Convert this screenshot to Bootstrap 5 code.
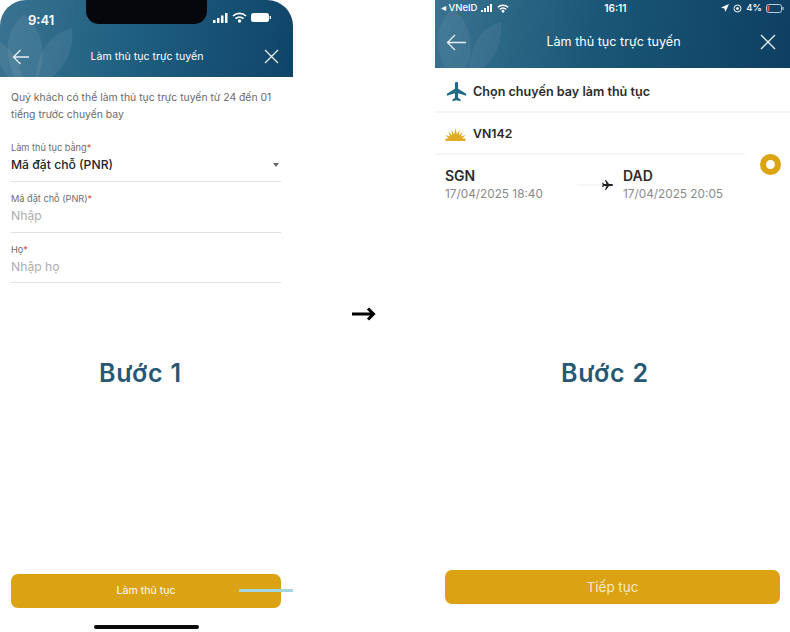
<!DOCTYPE html>
<html lang="vi">
<head>
    <meta charset="utf-8">
    <title>Làm thủ tục trực tuyến</title>
    <link href="https://cdn.jsdelivr.net/npm/bootstrap@5.3.0/dist/css/bootstrap.min.css" rel="stylesheet">
    <script src="https://cdn.jsdelivr.net/npm/bootstrap@5.3.0/dist/js/bootstrap.bundle.min.js"></script>
    <style>
        html, body { height: 100%; overflow: hidden; }
        body { background: #fff; font-family: Inter, "Liberation Sans", sans-serif; color: #2a2a2a; }
        .page-wrap { width: 790px; height: 632px; }
        .phone-one { position: relative; width: 293px; height: 632px; flex: none; }
        .phone-two { position: relative; width: 355px; height: 632px; flex: none; }
        .arrow-slot { width: 142px; flex: none; padding: 307px 0 0 59px; }
        .next-arrow { display: block; }
        .app-head { position: relative; overflow: hidden; color: #fff; background: linear-gradient(100deg, #3a7391 0%, #1f5f80 45%, #0f4468 100%); }
        .phone-one .app-head { height: 77px; border-radius: 26px 26px 0 0; }
        .phone-two .app-head { height: 68px; background: linear-gradient(100deg, #3a7391 0%, #1a5777 45%, #0e3f62 100%); }
        .leaf-art { position: absolute; left: 0; top: 0; }
        .notch-bar { position: absolute; left: 86px; top: 0; width: 121px; height: 24px; background: #05070a; border-radius: 0 0 13px 13px; }
        .status-one { position: relative; height: 38px; padding: 12px 22px 0 28px; font-size: 13px; font-weight: 600; line-height: 16px; }
        .status-two { position: relative; height: 16px; padding: 0 6px; font-size: 9.5px; line-height: 16px; font-weight: 500; }
        .status-time { font-size: 10px; font-weight: 600; }
        .head-row { position: relative; padding: 0 14px 0 12px; }
        .phone-one .head-row { height: 37px; font-size: 10.6px; }
        .phone-two .head-row { height: 52px; font-size: 12.6px; padding: 0 14px 0 11px; }
        .form-area { padding: 12px 12px 0 11px; }
        .intro-text { font-size: 10.4px; line-height: 17px; color: #6a6a6a; margin: 0 0 19px; white-space: nowrap; }
        .field-box { width: 270px; border-bottom: 1px solid #e2e2e2; height: 51px; padding-top: 11px; }
        .field-first { height: 40px; padding-top: 0; }
        .field-last { height: 50px; }
        .field-label { font-size: 9.2px; line-height: 12px; color: #6e6e6e; }
        .req-mark { color: #d8422e; }
        .field-value { font-size: 12.2px; line-height: 21px; font-weight: 500; color: #262626; }
        .field-hint { font-size: 12.2px; line-height: 21px; color: #aeaeae; }
        .select-caret { width: 0; height: 0; margin-right: 2px; border-left: 3.5px solid transparent; border-right: 3.5px solid transparent; border-top: 4px solid #666; }
        .step-name { font-weight: 600; font-size: 25px; letter-spacing: .8px; line-height: 30px; color: #275873; white-space: nowrap; }
        .phone-one .step-name { margin: 75px 0 0 99px; }
        .phone-two .step-name { margin: 154px 0 0 126px; }
        .gold-btn { background: #dba314; color: #fff; border: 0; border-radius: 7px; display: block; padding: 0; height: 34px; }
        .gold-btn:hover, .gold-btn:active { background: #dba314 !important; color: #fff !important; }
        .phone-one .gold-btn { margin: 186px 0 0 11px; width: 270px; font-size: 10.6px; }
        .phone-two .gold-btn { margin: 182px 0 0 10px; width: 335px; font-size: 13.4px; color: #f6e9c6; }
        .cursor-line { position: absolute; left: 239px; top: 589px; width: 54px; height: 3px; background: #a3d6e0; }
        .home-bar { margin: 17px 0 0 94px; width: 105px; height: 3.5px; background: #0b0b0b; border-radius: 2px; }
        .flight-title { height: 45px; padding: 5px 10px 0; gap: 5px; font-size: 12.6px; font-weight: 600; color: #2b2b2b; border-bottom: 2px solid #f6f6f6; }
        .vn-row { height: 42px; padding: 3px 10px 0; gap: 7px; font-size: 12.3px; font-weight: 600; border-bottom: 2px solid #f6f6f6; width: 310px; }
        .route-row { position: relative; padding: 12px 10px 0; }
        .airport-col { width: 178px; }
        .code-text { font-size: 14px; line-height: 18px; font-weight: 600; color: #2c2c2c; }
        .date-text { font-size: 11.8px; line-height: 19px; color: #8a8a8a; white-space: nowrap; }
        .mid-plane { position: absolute; left: 142px; top: 25px; }
        .radio-ring { position: absolute; left: 325px; top: 154px; width: 21px; height: 21px; border: 6px solid #dda412; border-radius: 50%; background: #fff; }
    </style>
</head>
<body>
<div class="page-wrap d-flex">

    <!-- buoc 1 -->
    <div class="phone-one">
        <div class="app-head">
            <svg class="leaf-art" width="90" height="77" viewBox="0 0 90 77" fill="#ffffff" fill-opacity=".07">
                <path d="M24 14C8 28 2 48 14 77h24C48 52 42 30 24 14Z"/>
                <path d="M72 28C50 34 38 50 36 77h16C66 66 74 50 72 28Z"/>
                <path d="M0 42C-4 52 -2 66 8 77H22C20 62 12 50 0 42Z"/>
            </svg>
            <div class="notch-bar"></div>
            <div class="status-one d-flex justify-content-between align-items-start">
                <span>9:41</span>
                <span class="d-flex align-items-center gap-1">
                    <svg width="15" height="10" viewBox="0 0 15 10" fill="#fff"><rect x="0" y="7" width="2.5" height="3"/><rect x="4" y="5" width="2.5" height="5"/><rect x="8" y="2.500" width="2.5" height="7.5"/><rect x="12" y="0" width="2.5" height="10"/></svg>
                    <svg width="15" height="11" viewBox="0 0 15 11" fill="none" stroke="#fff" stroke-width="1.7"><path d="M1 4a9.500 9.500 0 0 1 13 0"/><path d="M3.500 6.600a6 6 0 0 1 8 0"/><circle cx="7.5" cy="9" r=".9" fill="#fff"/></svg>
                    <svg width="20" height="9" viewBox="0 0 20 9" fill="#fff"><rect x="0" y="0" width="18" height="9" rx="2.5"/><rect x="18.6" y="3" width="1.4" height="3"/></svg>
                </span>
            </div>
            <div class="head-row d-flex justify-content-between align-items-center">
                <svg width="18" height="16" viewBox="0 0 18 16" fill="none" stroke="#e8f0f4" stroke-width="1.3"><path d="M17 8H1.500M8.500 1 1.500 8l7 7"/></svg>
                <span>Làm thủ tục trực tuyến</span>
                <svg width="15" height="15" viewBox="0 0 15 15" fill="none" stroke="#e8f0f4" stroke-width="1.3"><path d="M1 1l13 13M14 1 1 14"/></svg>
            </div>
        </div>
        <div class="form-area">
            <p class="intro-text">Quý khách có thể làm thủ tục trực tuyến từ 24 đến 01<br>tiếng trước chuyến bay</p>
            <div class="field-box field-first">
                <div class="field-label">Làm thủ tục bằng<span class="req-mark">*</span></div>
                <div class="d-flex justify-content-between align-items-center">
                    <span class="field-value">Mã đặt chỗ (PNR)</span>
                    <span class="select-caret"></span>
                </div>
            </div>
            <div class="field-box">
                <div class="field-label">Mã đặt chỗ (PNR)<span class="req-mark">*</span></div>
                <div class="field-hint">Nhập</div>
            </div>
            <div class="field-box field-last">
                <div class="field-label">Họ<span class="req-mark">*</span></div>
                <div class="field-hint">Nhập họ</div>
            </div>
        </div>
        <div class="step-name">Bước 1</div>
        <button type="button" class="btn gold-btn">Làm thủ tục</button>
        <div class="cursor-line"></div>
        <div class="home-bar"></div>
    </div>

    <div class="arrow-slot">
        <svg class="next-arrow" width="24" height="14" viewBox="0 0 24 14" fill="none" stroke="#000" stroke-width="3"><path d="M0 7h21M16 1.500 21.500 7 16 12.500"/></svg>
    </div>

    <!-- buoc 2 -->
    <div class="phone-two">
        <div class="app-head">
            <svg class="leaf-art" width="90" height="68" viewBox="0 0 90 68" fill="#ffffff" fill-opacity=".06">
                <path d="M18 8C2 22 -2 44 10 68h22C40 46 36 24 18 8Z"/>
                <path d="M66 22C46 28 36 44 34 68h14C60 58 68 42 66 22Z"/>
            </svg>
            <div class="status-two d-flex justify-content-between align-items-center">
                <span class="d-flex align-items-center gap-1">
                    <span>◂ VNeID</span>
                    <svg width="12" height="8" viewBox="0 0 12 8" fill="#fff"><rect x="0" y="6" width="2" height="2"/><rect x="3" y="4" width="2" height="4"/><rect x="6" y="2" width="2" height="6"/><rect x="9" y="0" width="2" height="8"/></svg>
                    <svg width="12" height="9" viewBox="0 0 15 11" fill="none" stroke="#fff" stroke-width="1.8"><path d="M1 4a9.500 9.500 0 0 1 13 0"/><path d="M3.500 6.600a6 6 0 0 1 8 0"/><circle cx="7.5" cy="9" r=".9" fill="#fff"/></svg>
                </span>
                <span class="status-time">16:11</span>
                <span class="d-flex align-items-center gap-1">
                    <svg width="8" height="8" viewBox="0 0 8 8" fill="#fff"><path d="M8 0 0 3.600l3.400 1L4.400 8Z"/></svg>
                    <svg width="9" height="9" viewBox="0 0 9 9" fill="none" stroke="#fff"><circle cx="4.5" cy="4.5" r="3.5"/><circle cx="4.5" cy="4.5" r="1" fill="#fff"/></svg>
                    <span>4%</span>
                    <svg width="18" height="9" viewBox="0 0 18 9" fill="none"><rect x=".5" y=".5" width="15" height="8" rx="2" stroke="#b9cbd6"/><rect x="1.5" y="1.5" width="2" height="6" fill="#e0564a"/><rect x="16.4" y="3" width="1.2" height="3" fill="#b9cbd6"/></svg>
                </span>
            </div>
            <div class="head-row d-flex justify-content-between align-items-center">
                <svg width="21" height="17" viewBox="0 0 21 17" fill="none" stroke="#e8f0f4" stroke-width="1.3"><path d="M20 8.500H1.500M9 1 1.500 8.500 9 16"/></svg>
                <span>Làm thủ tục trực tuyến</span>
                <svg width="16" height="16" viewBox="0 0 16 16" fill="none" stroke="#e8f0f4" stroke-width="1.3"><path d="M1 1l14 14M15 1 1 15"/></svg>
            </div>
        </div>
        <div class="flight-title d-flex align-items-center">
            <svg width="23" height="22" viewBox="0 0 24 24" fill="#1f6b86"><path d="M12 .8c-1 0-1.700 1-1.700 2.300v5.300L1.500 13.800V16l8.800-2.600v4.900l-2.700 2v1.800l4.400-1.200 4.400 1.200v-1.800l-2.700-2v-4.900l8.800 2.600v-2.200l-8.800-5.400V3.100C13.700 1.800 13 .8 12 .8Z"/></svg>
            <span>Chọn chuyến bay làm thủ tục</span>
        </div>
        <div class="vn-row d-flex align-items-center">
            <svg width="21" height="13" viewBox="0 0 21 13" fill="#e3ab22"><path d="M10.500 0l1.400 6.500L14.500 1.500l-.6 6L18 3.500l-2.200 5L20.500 7l-3.200 3.500h3.200V13H.5v-2.500h3.200L.5 7l4.700 1.500-2.200-5 4.100 4-.6-6 2.600 5Z"/></svg>
            <span>VN142</span>
        </div>
        <div class="route-row d-flex">
            <div class="airport-col">
                <div class="code-text">SGN</div>
                <div class="date-text">17/04/2025 18:40</div>
            </div>
            <svg class="mid-plane" width="36" height="10" viewBox="0 0 36 10"><path d="M0 5h26" stroke="#eeeeee"/><path d="M36 5c0-.6-.6-1-1.400-1h-2.600L29 0h-1l1.400 4H27l-1-1.200h-.9l.6 2.200-.6 2.200h.9L27 6h2.400L28 10h1l3-4h2.600c.8 0 1.400-.4 1.400-1Z" fill="#222"/></svg>
            <div>
                <div class="code-text">DAD</div>
                <div class="date-text">17/04/2025 20:05</div>
            </div>
        </div>
        <div class="radio-ring"></div>
        <div class="step-name">Bước 2</div>
        <button type="button" class="btn gold-btn">Tiếp tục</button>
    </div>
</div>
</body>
</html>
